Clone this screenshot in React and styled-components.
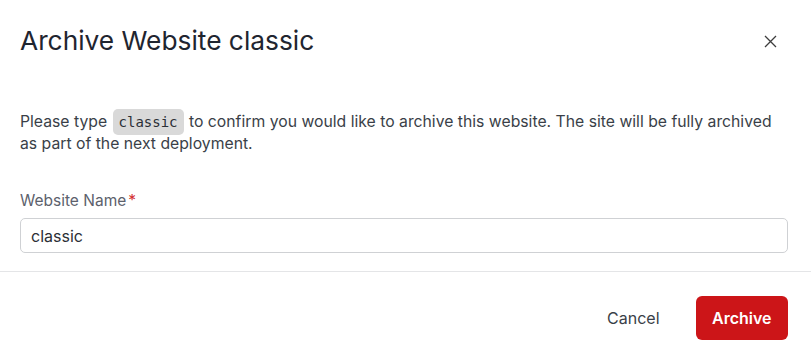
import React from "react";
import styled, { createGlobalStyle } from "styled-components";

const Global = createGlobalStyle`
  html, body { margin: 0; padding: 0; background: #ffffff; }
  body { font-family: Inter, "Noto Sans", sans-serif; -webkit-font-smoothing: antialiased; }
  * { box-sizing: border-box; }
`;

const Dialog = styled.div`
  width: 811px;
  height: 358px;
  background: #ffffff;
  display: flex;
  flex-direction: column;
`;

const Header = styled.div`
  display: flex;
  align-items: center;
  justify-content: space-between;
  padding: 0 34px 0 20px;
  height: 82px;
`;

const Title = styled.h2`
  margin: 0;
  font-size: 26.3px;
  line-height: 36px;
  font-weight: 400;
  color: #1f2530;
`;

const CloseButton = styled.button`
  border: none;
  background: transparent;
  padding: 0;
  width: 14px;
  height: 14px;
  display: flex;
  align-items: center;
  justify-content: center;
  cursor: pointer;
  color: #3d3d3d;
`;

const Body = styled.div`
  padding: 29px 23px 18px 20px;
  display: flex;
  flex-direction: column;
`;

const Paragraph = styled.p`
  margin: 0;
  font-size: 15.75px;
  line-height: 22px;
  color: #3a3f48;
`;

const Code = styled.code`
  font-family: "DejaVu Sans Mono", "Liberation Mono", monospace;
  font-size: 14px;
  background: #d9d9d9;
  color: #2b2f36;
  border-radius: 5px;
  padding: 5px 6px;
  margin: 0 1px;
`;

const Field = styled.div`
  display: flex;
  flex-direction: column;
  gap: 7px;
  margin-top: 36px;
`;

const Label = styled.label`
  font-size: 15.5px;
  line-height: 20px;
  color: #5c616c;
`;

const Required = styled.span`
  color: #d32f2f;
  margin-left: 2px;
`;

const Input = styled.input`
  width: 100%;
  height: 35px;
  border: 1px solid #cfd1d4;
  border-radius: 5px;
  padding: 0 10px;
  font-family: Inter, "Noto Sans", sans-serif;
  font-size: 16px;
  color: #2b2f36;
  outline: none;
`;

const Divider = styled.hr`
  margin: 0;
  border: none;
  border-top: 1px solid #e4e5e7;
`;

const Footer = styled.div`
  display: flex;
  justify-content: flex-end;
  align-items: center;
  gap: 18px;
  padding: 24px 23px 0 20px;
`;

const Button = styled.button`
  font-family: Inter, "Noto Sans", sans-serif;
  font-size: 16px;
  height: 44px;
  border-radius: 6px;
  border: none;
  padding: 0 ${(p) => (p.$primary ? "16.5px" : "18px")};
  cursor: pointer;
  font-weight: ${(p) => (p.$primary ? 600 : 400)};
  background: ${(p) => (p.$primary ? "#cc1518" : "transparent")};
  color: ${(p) => (p.$primary ? "#ffffff" : "#3a3f48")};
`;

export default function App() {
  return (
    <>
      <Global />
      <Dialog>
        <Header>
          <Title>Archive Website classic</Title>
          <CloseButton aria-label="Close">
            <svg width="13" height="13" viewBox="0 0 13 13" fill="none">
              <path d="M1 1L12 12M12 1L1 12" stroke="currentColor" strokeWidth="1.3" />
            </svg>
          </CloseButton>
        </Header>
        <Body>
          <Paragraph>
            Please type <Code>classic</Code> to confirm you would like to archive this website. The site will be fully archived as part of the next deployment.
          </Paragraph>
          <Field>
            <Label>
              Website Name<Required>*</Required>
            </Label>
            <Input defaultValue="classic" />
          </Field>
        </Body>
        <Divider />
        <Footer>
          <Button>Cancel</Button>
          <Button $primary>Archive</Button>
        </Footer>
      </Dialog>
    </>
  );
}
